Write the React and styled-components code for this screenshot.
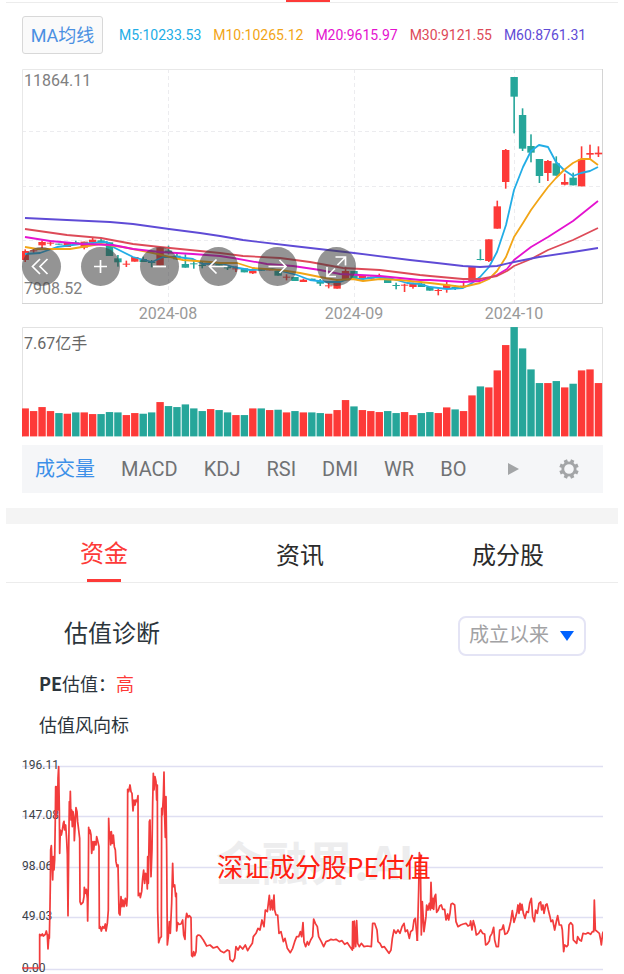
import React, { useState } from "react";
import styled, { createGlobalStyle } from "styled-components";

const RED = "#fd3a38";
const GREEN = "#26a69a";

const GlobalStyle = createGlobalStyle`
  * {
    box-sizing: border-box;
  }

  body {
    margin: 0;
    background: #fff;
    font-family: Roboto, "Noto Sans CJK SC", sans-serif;
    color: #333;
  }

  button, select {
    font-family: inherit;
    margin: 0;
    padding: 0;
    border: none;
    background: none;
    cursor: pointer;
  }
`;

const Page = styled.main`
  padding: 0 6px;
`;

const PeriodEdge = styled.div`
  display: flex;
  justify-content: center;
  height: 3px;
  padding-right: 8px;
  border-bottom: 1px solid #ececec;
`;

const PeriodMark = styled.span`
  width: 44px;
  height: 2px;
  background: ${RED};
`;

const QuotePanel = styled.section`
  padding: 13px 15px 15px 16px;
`;

const AverageRow = styled.div`
  display: flex;
  align-items: center;
  gap: 16px;
  margin-bottom: 15px;
`;

const AverageButton = styled.button`
  width: 81px;
  height: 38px;
  padding-bottom: 3px;
  border: 1px solid #d8d8d8;
  border-radius: 3px;
  background: #fafafa;
  color: #4a90e2;
  font-size: 18px;
  white-space: nowrap;
`;

const AverageList = styled.div`
  display: flex;
  gap: 12px;
  font-size: 14px;
  white-space: nowrap;
`;

const AverageValue = styled.span`
  color: ${(props) => props.$color};
`;

const ChartBox = styled.div`
  position: relative;
`;

const Chart = styled.svg`
  display: block;
  width: 100%;
  height: auto;
`;

const ChartText = styled.text`
  font-size: 16px;
  fill: ${(props) => props.$color || "#808080"};
`;

const ChartTools = styled.div`
  position: absolute;
  left: 0;
  bottom: 41px;
  display: flex;
  gap: 20px;
`;

const ToolButton = styled.button`
  width: 39px;
  height: 39px;
  border-radius: 50%;
  background: rgba(60, 60, 60, 0.55);
`;

const ToolIcon = styled.svg`
  display: block;
  fill: none;
  stroke: #fff;
  stroke-width: 1.7;
`;

const IndicatorBar = styled.div`
  display: flex;
  align-items: center;
  height: 48px;
  margin-top: 8px;
  padding: 0 24px 0 13px;
  background: #f5f6f8;
`;

const IndicatorList = styled.div`
  display: flex;
  flex: 1;
  gap: 26px;
`;

const IndicatorButton = styled.button`
  color: ${(props) => (props.$active ? "#3d90e8" : "#707274")};
  font-size: 20px;
  line-height: 28px;
  white-space: nowrap;
`;

const IconButton = styled.button`
  display: flex;
  margin-left: ${(props) => props.$gap || 0};
  color: #a3a5a7;
`;

const Band = styled.div`
  height: 16px;
  background: #f4f4f4;
`;

const Tabs = styled.nav`
  display: flex;
  justify-content: space-around;
  height: 59px;
  border-bottom: 1px solid #ececec;
`;

const Tab = styled.button`
  display: flex;
  flex-direction: column;
  align-items: center;
  color: ${(props) => (props.$active ? RED : "#2b2b2b")};
  font-size: 24px;

  span {
    flex: 1;
    display: flex;
    align-items: center;
  }

  &::after {
    content: "";
    display: ${(props) => (props.$active ? "block" : "none")};
    width: 34px;
    height: 3px;
    background: ${RED};
  }
`;

const ValuationPanel = styled.section`
  padding: 33px 15px 0 16px;
`;

const ValuationHead = styled.header`
  display: flex;
  align-items: center;
  justify-content: space-between;
  padding: 0 17px 0 42px;
`;

const ValuationTitle = styled.h2`
  margin: 0;
  padding-bottom: 4px;
  color: #2c353c;
  font-size: 24px;
  font-weight: 400;
  line-height: 36px;
`;

const SelectBox = styled.div`
  position: relative;

  svg {
    position: absolute;
    top: 15px;
    right: 12px;
    pointer-events: none;
  }
`;

const RangeSelect = styled.select`
  appearance: none;
  display: block;
  width: 128px;
  height: 40px;
  padding: 0 0 2px 9px;
  border: 2px solid #e4e4f5;
  border-radius: 8px;
  background: #fff;
  color: #a2a2a4;
  font-size: 20px;
`;

const ValuationLine = styled.p`
  margin: 13px 0 0 17px;
  color: #2c353c;
  font-family: "Noto Sans CJK SC", sans-serif;
  font-size: 18px;
  line-height: 28px;
`;

const Level = styled.span`
  color: ${RED};
`;

const ValuationChart = styled(Chart)`
  margin-top: 20px;
`;

const AxisText = styled.text`
  font-size: 12px;
  fill: #3c4248;
`;

const Watermark = styled.text`
  font-family: "Noto Sans CJK SC", sans-serif;
  font-size: 46px;
  font-weight: 700;
  fill: #ededee;
`;

const Caption = styled.text`
  font-family: "Noto Sans CJK SC", sans-serif;
  font-size: 26px;
  fill: #ff2010;
`;

const averages = [
  {
    label: "M5:10233.53",
    color: "#22ade6",
    points:
      "3,185 18,184 35,178 58,175 85,173 93,179 111,188 130,193 141,188 155,188 171,190 181,195 198,194 211,198 228,201 251,200 275,206 288,211 305,213 318,213 326,210 341,210 355,208 371,210 385,214 398,215 408,218 425,220 441,219 450,214 458,208 467,198 475,183 484,156 492,121 501,98 509,82 517,76 526,78 534,93 542,101 551,107 559,104 568,102 576,98",
  },
  {
    label: "M10:10265.12",
    color: "#f2a516",
    points:
      "3,178 15,180 48,180 78,175 101,178 131,184 161,191 188,193 198,194 215,194 231,199 258,201 278,204 298,208 315,211 331,210 341,212 358,210 378,211 398,213 408,214 441,218 458,214 467,210 475,202 484,188 492,168 501,154 509,141 517,130 526,118 534,109 542,101 551,94 559,90 568,90 576,96",
  },
  {
    label: "M20:9615.97",
    color: "#e412cf",
    points:
      "3,168 28,172 61,175 91,176 111,180 138,183 171,185 198,187 211,189 245,195 271,197 298,201 318,205 358,207 398,211 408,211 441,213 458,212 475,206 485,200 492,191 509,178 526,168 551,152 576,132",
  },
  {
    label: "M30:9121.55",
    color: "#dd4a58",
    points:
      "3,160 45,166 79,169 111,175 138,178 168,181 198,184 221,187 258,189 288,193 321,199 358,201 398,206 408,207 441,210 458,210 475,207 485,202 492,197 509,190 526,181 551,171 576,159",
  },
  {
    label: "M60:8761.31",
    color: "#5f4bd6",
    points:
      "3,149 45,151 88,153 111,155 147,160 178,164 198,167 221,171 271,177 332,184 388,191 415,194 441,197 458,198 475,197 492,193 517,188 551,183 576,179",
  },
];

// [rising, body top, body bottom, wick top, wick bottom, volume], in thirds of a pixel
const days = [
  [1, 573, 600, 568, 606, 84],
  [1, 571, 574, 566, 580, 76],
  [1, 546, 556, 541, 565, 88],
  [1, 548, 551, 541, 557, 76],
  [0, 551, 554, 551, 554, 70],
  [1, 546, 561, 546, 561, 68],
  [0, 547, 550, 542, 553, 72],
  [1, 545, 563, 545, 568, 72],
  [1, 539, 548, 534, 550, 67],
  [0, 541, 546, 536, 550, 67],
  [0, 547, 588, 547, 588, 73],
  [0, 595, 607, 585, 620, 72],
  [1, 611, 614, 602, 621, 64],
  [1, 591, 605, 591, 605, 70],
  [0, 597, 606, 590, 606, 68],
  [0, 606, 609, 600, 622, 72],
  [1, 562, 616, 562, 616, 103],
  [0, 572, 576, 557, 583, 91],
  [0, 587, 598, 580, 600, 88],
  [0, 612, 623, 583, 623, 96],
  [0, 610, 613, 598, 626, 84],
  [0, 615, 618, 605, 625, 76],
  [1, 610, 614, 605, 618, 82],
  [0, 608, 617, 608, 617, 79],
  [0, 620, 625, 620, 630, 72],
  [1, 625, 628, 619, 636, 64],
  [0, 625, 637, 625, 637, 64],
  [1, 631, 640, 625, 642, 84],
  [0, 628, 632, 628, 632, 84],
  [1, 628, 631, 628, 631, 79],
  [0, 633, 647, 633, 647, 80],
  [1, 650, 653, 643, 661, 72],
  [0, 651, 663, 651, 663, 76],
  [1, 659, 666, 656, 666, 72],
  [0, 656, 660, 656, 660, 72],
  [0, 662, 671, 657, 678, 70],
  [1, 676, 679, 668, 685, 68],
  [1, 668, 686, 660, 686, 79],
  [1, 633, 661, 621, 661, 109],
  [0, 633, 657, 633, 657, 90],
  [1, 645, 657, 645, 657, 79],
  [1, 650, 656, 650, 656, 76],
  [1, 648, 652, 641, 652, 73],
  [0, 658, 669, 658, 669, 76],
  [0, 675, 678, 668, 688, 70],
  [1, 674, 677, 671, 696, 73],
  [1, 672, 681, 668, 686, 64],
  [0, 671, 681, 665, 681, 70],
  [0, 681, 692, 681, 692, 73],
  [1, 690, 693, 686, 706, 70],
  [1, 674, 686, 664, 698, 87],
  [0, 681, 685, 676, 690, 81],
  [1, 677, 680, 662, 682, 76],
  [1, 620, 666, 620, 666, 123],
  [0, 597, 600, 568, 601, 150],
  [1, 538, 603, 538, 606, 147],
  [1, 439, 506, 422, 506, 198],
  [1, 270, 366, 267, 386, 274],
  [0, 51, 110, 51, 220, 328],
  [0, 165, 266, 145, 273, 264],
  [0, 258, 278, 223, 307, 201],
  [0, 297, 348, 297, 369, 160],
  [1, 303, 339, 300, 363, 160],
  [0, 310, 347, 289, 347, 166],
  [1, 366, 374, 341, 376, 147],
  [0, 353, 376, 338, 376, 158],
  [1, 298, 379, 259, 379, 198],
  [1, 279, 284, 254, 300, 201],
  [1, 278, 283, 259, 291, 160],
];

const dayX = (index) => 3.2 + index * 8.43;

const months = [
  { label: "2024-08", x: 146 },
  { label: "2024-09", x: 332 },
  { label: "2024-10", x: 492 },
];

const tools = [
  { label: "后退", d: "M18 12L10.5 19.5L18 27M25.5 12L18 19.5L25.5 27" },
  { label: "放大", d: "M13 19.5H26M19.5 13V26" },
  { label: "缩小", d: "M13 19.5H26" },
  { label: "左移", d: "M28.5 19.5H10.5M17.5 12.5L10.5 19.5L17.5 26.5" },
  { label: "右移", d: "M10.5 19.5H28M21.5 13L28 19.5L21.5 26" },
  {
    label: "全屏",
    d: "M18.5 10H28.5V18.5M28.5 10L20.5 18M10 20V29.5H19M10 29.5L18 21.5",
  },
];

const indicators = ["成交量", "MACD", "KDJ", "RSI", "DMI", "WR", "BO"];
const tabs = ["资金", "资讯", "成分股"];

const peLevels = [
  { label: "196.11", y: 8 },
  { label: "147.08", y: 58 },
  { label: "98.06", y: 109 },
  { label: "49.03", y: 159 },
  { label: "0.00", y: 211 },
];

// three periods of the PE line, each with its own start
const pePeriods = [
  {
    start: 0,
    points:
      "66,654 119,654 119,553 123,557 127,552 130,558 136,553 139,543 142,556 144,597 147,553 148,565 150,470 151,400 152,300 154,287 156,340 158,390 160,320 162,360 164,330 166,200 167,110 169,200 171,110 173,180 174,85 176,50 178,180 179,310 181,240 184,255 187,240 190,220 192,214 194,240 197,225 200,270 202,313 204,497 206,310 208,155 210,170 211,124 213,210 215,180 217,230 219,185 222,205 223,272 226,215 228,173 231,185 233,215 236,240 239,265 240,455 243,463 249,457 252,440 253,412 256,430 259,418 262,445 263,513 265,400 266,232 268,250 270,240 273,255 275,310 279,275 281,300 284,275 288,285 290,260 293,272 297,290 298,535 301,530 304,543 308,530 312,535 316,522 318,543 322,520 325,480 326,205 328,260 330,246 332,285 334,245 337,280 340,255 343,290 346,300 348,335 351,350 354,345 357,490 360,495 363,440 366,470 369,450 372,470 376,445 380,468 382,440 383,118 386,125 390,105 393,125 396,130 399,183 402,150 405,165 408,150 411,155 414,137 415,437 419,430 421,443 425,425 428,385 431,360 434,400 437,370 440,380 442,417 443,320 445,400 448,215 450,210 453,380 456,300 458,160 460,70 462,120 465,80 468,95 470,150 472,105 473,480 476,578 480,565 484,560 485,175 487,195 490,140 492,66 494,200 496,262 498,140 500,300 502,585 505,560 508,515 511,550 515,460 518,340 520,410 524,405 527,440 529,430 530,543 533,518 537,523 543,522 548,510 551,555 555,568 557,510 560,490 564,502 568,497 573,503 575,617 578,620 581,605 584,617 588,605 590,560 594,555 600,556",
  },
  {
    start: 600,
    points:
      "0,556 10,570 20,588 30,585 40,594 52,590 62,603 72,608 82,600 88,603 90,628 98,635 104,625 108,590 114,600 120,588 128,597 136,585 143,602 150,590 157,580 160,560 168,550 174,535 180,540 186,510 192,530 196,480 202,485 208,436 211,480 215,450 218,480 222,435 224,480 228,495 233,495 237,550 243,545 250,575 255,565 262,595 271,608 278,595 284,575 290,560 296,560 301,545 305,560 309,518 312,575 317,590 322,575 326,585 332,570 338,560 341,507 346,520 352,530 356,560 364,575 371,590 378,575 386,572 393,568 400,570 408,568 418,575 426,572 434,583 442,578 450,590 457,600 458,515 461,595 463,513 467,590 470,512 473,580 478,590 484,580 492,590 502,588 514,590 518,520 524,520 531,540 534,575 540,580 546,592 553,590 560,600 567,610 573,600 577,565 582,540 588,550 594,540 600,550 606,530 612,520 616,545 622,540 628,565 632,545 638,540 642,510 646,505 652,573",
  },
  {
    start: 1212,
    points:
      "40,573 44,420 46,308 49,320 52,555 55,455 60,545 66,500 68,465 72,480 76,460 79,480 81,397 84,475 87,445 89,478 92,440 95,433 98,487 103,480 107,468 112,465 116,478 122,478 126,510 131,492 134,510 138,490 141,463 146,460 152,465 156,515 162,530 170,525 178,522 186,520 192,528 198,525 200,513 204,540 208,512 213,530 217,555 224,550 230,540 236,550 242,552 245,585 250,582 256,573 258,560 264,550 269,532 272,570 277,590 283,590 287,540 294,538 298,525 303,553 309,550 314,540 320,515 325,482 330,517 335,500 339,485 342,465 345,490 348,460 351,480 354,463 358,490 363,505 368,485 373,487 377,460 382,445 386,500 391,515 395,480 400,490 405,460 410,456 413,480 417,465 420,490 425,465 429,462 433,480 438,500 441,515 446,510 452,540 458,510 461,497 466,525 472,525 475,540 479,605 482,585 488,590 492,585 495,525 500,518 506,525 508,570 513,575 518,580 521,560 527,570 532,573 537,550 545,552 552,548 560,553 565,545 569,545 571,450 574,540 580,545 586,550 590,570 592,585 596,550 598,545",
  },
];

const PriceChart = () => (
  <ChartBox>
    <Chart viewBox="0 0 581 258">
      <g stroke="#ececef" strokeDasharray="4 3">
        {[62, 117, 171].map((y) => (
          <line key={y} x1="0" x2="580" y1={y + 0.5} y2={y + 0.5} />
        ))}
        {months.map(({ x }) => (
          <line key={x} x1={x + 0.5} x2={x + 0.5} y1="0" y2="234" />
        ))}
      </g>
      <path d="M0.5 234V0.5H580" fill="none" stroke="#e8e8e8" />
      <path d="M0 234.5H580.5V0" fill="none" stroke="#d4d4d4" />
      {days.map(([rising, top, bottom, high, low], index) => (
        <g key={index} fill={rising ? RED : GREEN}>
          <rect
            x={Math.max(0, dayX(index) - 3.7)}
            y={top / 3 - 9}
            width={index ? 7.4 : 6.9}
            height={(bottom - top) / 3}
          />
          <rect
            x={dayX(index) - 0.8}
            y={high / 3 - 9}
            width="1.6"
            height={(low - high) / 3}
          />
        </g>
      ))}
      {averages.map(({ label, color, points }) => (
        <polyline
          key={label}
          points={points}
          fill="none"
          stroke={color}
          strokeWidth="1.8"
          strokeLinejoin="round"
        />
      ))}
      <ChartText x="2" y="17">
        11864.11
      </ChartText>
      <ChartText x="2" y="225">
        7908.52
      </ChartText>
      {months.map(({ label, x }) => (
        <ChartText key={label} $color="#999" x={x} y="250" textAnchor="middle">
          {label}
        </ChartText>
      ))}
    </Chart>
    <ChartTools>
      {tools.map(({ label, d }) => (
        <ToolButton key={label} type="button" aria-label={label}>
          <ToolIcon width="39" height="39" viewBox="0 0 39 39">
            <path d={d} />
          </ToolIcon>
        </ToolButton>
      ))}
    </ChartTools>
  </ChartBox>
);

const VolumeChart = () => (
  <Chart viewBox="0 0 581 110">
    <path d="M0.5 110V0.5H580.5V110" fill="none" stroke="#e2e2e2" />
    {days.map((day, index) => (
      <rect
        key={index}
        x={Math.max(0, dayX(index) - 3.7)}
        y={109.4 - day[5] / 3}
        width={index ? 7.4 : 6.9}
        height={day[5] / 3}
        fill={day[0] ? RED : GREEN}
      />
    ))}
    <ChartText x="2" y="22" $color="#666">
      7.67亿手
    </ChartText>
  </Chart>
);

const GearIcon = () => (
  <svg width="20" height="20" viewBox="0 0 20 20" fill="none" stroke="currentColor">
    <circle cx="10" cy="10" r="6.2" strokeWidth="2.8" />
    {[0, 45, 90, 135, 180, 225, 270, 315].map((angle) => (
      <path
        key={angle}
        d="M10 0.3V4"
        strokeWidth="3.6"
        transform={`rotate(${angle + 22.5} 10 10)`}
      />
    ))}
  </svg>
);

const PeChart = () => (
  <ValuationChart viewBox="0 0 581 216">
    {peLevels.map(({ label, y }) => (
      <g key={label}>
        <line x1="0" x2="581" y1={y + 0.5} y2={y + 0.5} stroke="#dfdff2" strokeWidth="1.4" />
        <AxisText x="0" y={y + 3}>
          {label}
        </AxisText>
      </g>
    ))}
    <Watermark x="194" y="122">
      金融界.AI
    </Watermark>
    <g
      transform="translate(-22 -8) scale(0.33333)"
      fill="none"
      stroke="#f23c3c"
      strokeWidth="5.2"
      strokeLinejoin="round"
    >
      {pePeriods.map(({ start, points }) => (
        <polyline key={start} points={points} transform={`translate(${start} 0)`} />
      ))}
    </g>
    <Caption x="195" y="119">
      深证成分股PE估值
    </Caption>
  </ValuationChart>
);

const App = () => {
  const [indicator, setIndicator] = useState("成交量");
  const [tab, setTab] = useState("资金");

  return (
    <Page>
      <GlobalStyle />
      <PeriodEdge>
        <PeriodMark />
      </PeriodEdge>
      <QuotePanel>
        <AverageRow>
          <AverageButton type="button">MA均线</AverageButton>
          <AverageList>
            {averages.map(({ label, color }) => (
              <AverageValue key={label} $color={color}>
                {label}
              </AverageValue>
            ))}
          </AverageList>
        </AverageRow>
        <PriceChart />
        <VolumeChart />
        <IndicatorBar>
          <IndicatorList>
            {indicators.map((name) => (
              <IndicatorButton
                key={name}
                type="button"
                $active={name === indicator}
                onClick={() => setIndicator(name)}
              >
                {name}
              </IndicatorButton>
            ))}
          </IndicatorList>
          <IconButton type="button" aria-label="更多">
            <svg width="11" height="12" viewBox="0 0 11 12">
              <path d="M0 0L11 6L0 12Z" fill="currentColor" />
            </svg>
          </IconButton>
          <IconButton type="button" aria-label="设置" $gap="40px">
            <GearIcon />
          </IconButton>
        </IndicatorBar>
      </QuotePanel>
      <Band />
      <Tabs>
        {tabs.map((name) => (
          <Tab
            key={name}
            type="button"
            $active={name === tab}
            onClick={() => setTab(name)}
          >
            <span>{name}</span>
          </Tab>
        ))}
      </Tabs>
      <ValuationPanel>
        <ValuationHead>
          <ValuationTitle id="valuation">估值诊断</ValuationTitle>
          <SelectBox>
            <RangeSelect aria-labelledby="valuation">
              <option>成立以来</option>
            </RangeSelect>
            <svg width="14" height="10" viewBox="0 0 14 10">
              <path d="M0 0H14L7 10Z" fill="#0062ff" />
            </svg>
          </SelectBox>
        </ValuationHead>
        <ValuationLine>
          <b>PE</b>估值：<Level>高</Level>
        </ValuationLine>
        <ValuationLine>估值风向标</ValuationLine>
        <PeChart />
      </ValuationPanel>
    </Page>
  );
};

export default App;
